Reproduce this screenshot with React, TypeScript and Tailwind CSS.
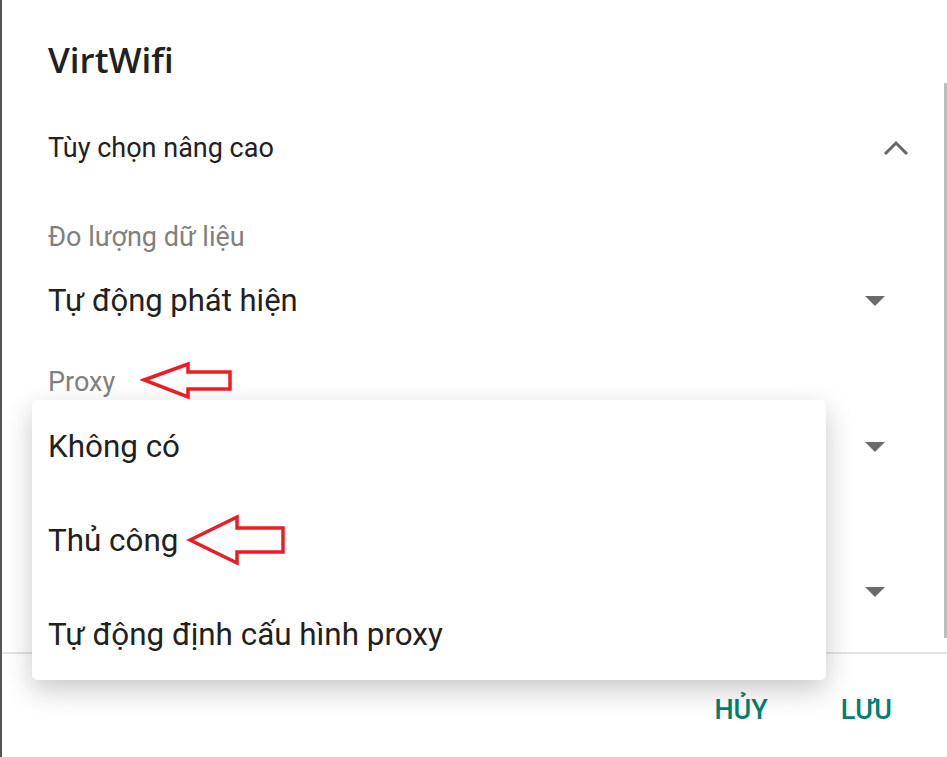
import { FC } from 'react';

const Caret: FC = () => (
  <svg width="20" height="10" viewBox="0 0 20 10" className="shrink-0">
    <polygon points="0,0 20,0 10,10" fill="#6b6b6b" />
  </svg>
);

const RedArrow: FC<{ points: string; w: number; h: number; className: string }> = ({ points, w, h, className }) => (
  <svg width={w} height={h} viewBox={`0 0 ${w} ${h}`} className={className}>
    <polygon points={points} fill="none" stroke="#ed1c24" strokeWidth="3.5" strokeLinejoin="miter" />
  </svg>
);

const MENU_ITEMS = ['Không có', 'Thủ công', 'Tự động định cấu hình proxy'];

export default function App() {
  return (
    <div
      className="relative w-[947px] h-[757px] overflow-hidden bg-white border-l-2 border-[#555]"
      style={{ fontFamily: 'Roboto, "Noto Sans", sans-serif' }}
    >
      <div className="flex flex-col pl-[46px] pr-[62px]">
        {/* Tiêu đề */}
        <div className="h-[80px] mt-[20px] flex items-center">
          <h1
            className="text-[35px] font-semibold text-[#212121]"
            style={{ fontFamily: '"Open Sans", "Noto Sans", sans-serif' }}
          >
            VirtWifi
          </h1>
        </div>

        <div className="h-[96px] flex items-center justify-between">
          <span className="text-[27px] text-[#212121]">Tùy chọn nâng cao</span>
          <svg width="26" height="18" viewBox="0 0 26 18" className="-mr-[24px]">
            <polyline points="2,15 13,4 24,15" fill="none" stroke="#666" strokeWidth="3" />
          </svg>
        </div>

        <div className="h-[54px] mt-[14px] flex items-center">
          <span className="text-[27px] text-[#808080]">Đo lượng dữ liệu</span>
        </div>

        <div className="h-[54px] mt-[10px] flex items-center justify-between">
          <span className="text-[31px] text-[#212121]">Tự động phát hiện</span>
          <Caret />
        </div>

        <div className="h-[54px] mt-[27px] flex items-center">
          <span className="text-[27px] text-[#808080]">Proxy</span>
        </div>

        <div className="h-[54px] mt-[11px] flex items-center justify-end">
          <Caret />
        </div>

        <div className="h-[54px] mt-[91px] flex items-center justify-end">
          <Caret />
        </div>
      </div>

      <div className="mt-[33px] h-[2px] bg-[#e3e3e3]" />

      <div className="h-[112px] flex items-center justify-end gap-[73px] pr-[55px]">
        <button className="text-[27px] font-medium text-[#00806f]">HỦY</button>
        <button className="text-[27px] font-medium text-[#00806f]">LƯU</button>
      </div>

      {/* Thanh cuộn */}
      <div className="absolute right-0 top-[83px] w-[3px] h-[555px] bg-[#bdbdbd]" />

      {/* Menu thả xuống */}
      <div className="absolute left-[30px] top-[400px] w-[794px] h-[280px] bg-white rounded-[5px] shadow-[0_10px_28px_rgba(0,0,0,0.22)] flex flex-col">
        {MENU_ITEMS.map((item) => (
          <div key={item} className="h-[94px] shrink-0 flex items-center pl-[16px]">
            <span className="text-[31.4px] text-[#212121]">{item}</span>
          </div>
        ))}
      </div>

      <RedArrow
        className="absolute left-[138px] top-[360px]"
        w={95}
        h={40}
        points="4,20 48,4 48,12 90,12 90,29 48,29 48,37"
      />
      <RedArrow
        className="absolute left-[183px] top-[512px]"
        w={104}
        h={56}
        points="5,28 52,5 52,16 98,16 98,40 52,40 52,51"
      />
    </div>
  );
}
